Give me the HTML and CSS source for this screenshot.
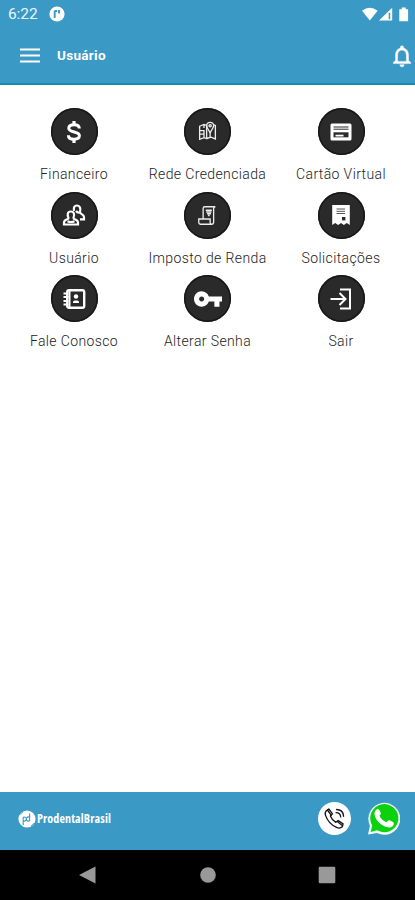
FILE: index.html
```html
<!DOCTYPE html>
<html lang="pt-BR">
<head>
<meta charset="utf-8">
<meta name="viewport" content="width=device-width, initial-scale=1">
<title>Usuário</title>
<link rel="stylesheet" href="styles.css">
</head>
<body>
<header class="header">
  <div class="status">
    <span class="time">6:22</span>
    <svg class="status-app" viewBox="0 0 16 16"><circle cx="8" cy="8" r="7.6" fill="#fff"/><path d="M5.700 12V4.800M5.700 5H8.200M10 4v3.400" fill="none" stroke="#3b99c6" stroke-width="1.900"/></svg>
    <svg class="status-icons" viewBox="0 0 48 15"><path d="M0 3.700Q7.800-2 15.600 3.700L7.800 13.500Z" fill="#fff"/><path d="M17 13.500 30.200.7v12.800Z" fill="#fff"/><path d="M26.700 5.800h1.500v6.500h-1.500Z" fill="#3b99c6"/><path d="M37.300 2.200h2.400V.5h4v1.700h2.400v12h-8.800Z" fill="#fff"/></svg>
  </div>
  <div class="toolbar">
    <svg class="menu" viewBox="0 0 20 15"><path d="M0 1.500h20M0 7.500h20M0 13.500h20" stroke="#fff" stroke-width="2.200"/></svg>
    <h1 class="title">Usuário</h1>
    <svg class="bell" viewBox="0 0 24 24"><path fill="#fff" stroke="#fff" stroke-width=".4" d="M12 22c1.100 0 2-.9 2-2h-4c0 1.100.9 2 2 2zm6-6v-5c0-3.070-1.630-5.640-4.500-6.320V4c0-.83-.67-1.500-1.500-1.500s-1.500.67-1.500 1.500v.68C7.640 5.360 6 7.920 6 11v5l-2 2v1h16v-1l-2-2zm-2 1H8v-6c0-2.480 1.510-4.500 4-4.500s4 2.020 4 4.500v6z"/></svg>
  </div>
</header>
<main class="grid">
  <div class="item"><div class="disc"><svg class="glyph" viewBox="0 0 24 24"><path d="M17.300 8.500C17.300 5.500 15 4.700 12 4.700S6.800 5.900 6.800 8.200c0 4.800 10.600 2.900 10.600 7.400 0 2.500-2.400 3.700-5.400 3.700s-5.600-1.200-5.600-4" fill="none" stroke="#fff" stroke-width="3"/><path d="M10.400 1h3.200v3.500h-3.200zM10.400 19.500h3.200V23h-3.200z" fill="#fff"/></svg></div><span class="label">Financeiro</span></div>
  <div class="item"><div class="disc"><svg class="glyph line" viewBox="0 0 24 24"><path d="M3 6l5-2 3 1v15l-3-1-5 2ZM11 20l5-1.500 5 2V5l-2-.7M8 4v4M3 11h5v4H3M8 15v4"/><path d="M15 14c-1-4-4-5.500-4-8.500a4 4 0 0 1 8 0c0 3-3 4.500-4 8.500v5"/><circle cx="15" cy="5.500" r="1.300"/></svg></div><span class="label">Rede Credenciada</span></div>
  <div class="item"><div class="disc"><svg class="glyph" viewBox="0 0 24 24"><rect x="1.500" y="3.500" width="21" height="17" rx="1.500" fill="#fff"/><path d="M4.500 7h15M4.500 9.200h15" stroke="#2a2a2a" stroke-width="1"/><path d="M4.500 12.300h15v5h-15Z" fill="#2a2a2a"/><path d="M6.500 15.600h8" stroke="#fff" stroke-width="1.800"/></svg></div><span class="label">Cartão Virtual</span></div>
  <div class="item"><div class="disc"><svg class="glyph users" viewBox="0 0 24 24"><path d="M12 8C11.500 4.500 12 2.500 15 2.500s4 3 3 6.800c0 2 4 1.700 4 4.700v2.300h-4"/><path d="M14 8q1.500 2 3.500 1.500"/><path d="M6.500 15C5 11.500 5.500 8.500 8.800 8.500s4 3 2.700 6.500c0 1.800 4.500 1.500 4.500 4.500v2H2v-2c0-3 4.500-2.700 4.500-4.500Z"/><path d="M5.500 18.200q3.500 1.600 7 0"/></svg></div><span class="label">Usuário</span></div>
  <div class="item"><div class="disc"><svg class="glyph line" viewBox="0 0 24 24"><path d="M7 16V4a2 2 0 0 1 2-2h12a2 2 0 0 0-2 2v16a2 2 0 0 1-2 2H4a2 2 0 0 1-2-2v-4h13v4a2 2 0 0 0 4 0"/><path d="M10 6h7M10.500 8h6M11.500 10h4.500M12.500 12h2"/></svg></div><span class="label">Imposto de Renda</span></div>
  <div class="item"><div class="disc"><svg class="glyph" viewBox="0 0 24 24"><path d="M3.200 2h17.600v20l-3-2-2.900 2-2.900-2-2.900 2-2.900-2-3 2Z" fill="#fff"/><path d="M7.500 6h8.500M7.500 8.300h8.500M7.500 10.500h8.500" stroke="#555" stroke-width="1"/><path d="M13 14h3.400v3.400H13Z" fill="#2a2a2a"/></svg></div><span class="label">Solicitações</span></div>
  <div class="item"><div class="disc"><svg class="glyph" viewBox="0 0 24 24"><rect x="5.200" y="3.200" width="17" height="17.600" rx="1.800" fill="none" stroke="#fff" stroke-width="2.400"/><path d="M7.500 3v18" stroke="#fff" stroke-width="2"/><path d="M1.500 6.500h5M1.500 10h5M1.500 14h5M1.500 17.500h5" stroke="#fff" stroke-width="2"/><circle cx="14" cy="9.500" r="2.200" fill="#fff"/><path d="M11 16v-1.200c0-1.700 6-1.700 6 0V16Z" fill="#fff"/></svg></div><span class="label">Fale Conosco</span></div>
  <div class="item"><div class="disc"><svg class="key" viewBox="1 5 22 14"><path fill="#fff" d="M12.650 10C11.830 7.670 9.610 6 7 6c-3.310 0-6 2.690-6 6s2.690 6 6 6c2.610 0 4.830-1.670 5.650-4H17v4h4v-4h2v-4H12.650zM7 14c-1.100 0-2-.9-2-2s.9-2 2-2 2 .9 2 2-.9 2-2 2z"/></svg></div><span class="label">Alterar Senha</span></div>
  <div class="item"><div class="disc"><svg class="glyph" viewBox="0 0 24 24"><path d="M1.500 12h15M10.500 6l6 6-6 6M11 2.500h10v19H11" fill="none" stroke="#fff" stroke-width="2"/></svg></div><span class="label">Sair</span></div>
</main>
<footer class="footer">
  <div class="brand">
    <svg class="logo" viewBox="0 0 18 18"><circle cx="9" cy="9" r="8.600" fill="#fff"/><path d="M5.200 15V7.500a2 2 0 1 1 0 3.200M11.600 3.500v7a2 2 0 1 1 0-3" fill="none" stroke="#3b99c6" stroke-width="1.100"/><path d="M2 4.500 5 2M13 16l3-3" stroke="#3b99c6" stroke-width=".8"/></svg>
    <span class="brand-name">ProdentalBrasil</span>
  </div>
  <div class="contacts">
    <svg class="phone" viewBox="0 0 32 32"><circle cx="16" cy="16" r="16" fill="#fff"/><g fill="none" stroke="#151515" stroke-width="1.300" stroke-linejoin="round" stroke-linecap="round"><path d="M8.300 8.200 10.500 6.800 14 11.500l-2 2q1.500 4 5.300 6.200l2.200-1.800 4.800 3.300-.7 2.900q-2.400 2-5.600.6Q10 21 7.300 13q-1-3 1-4.800Z"/><path d="m9.300 8 3.500 4.800M18.700 19l4.500 3.500M18 7.300q6.300 0 6.800 6.500M17.500 10.300q4.200 0 4.500 4.200"/></g></svg>
    <svg class="whatsapp" viewBox="0 0 32 34"><path d="M1 32.500 2.800 24A15.500 15.500 0 1 1 9.500 31Z" fill="#f4fff3"/><path d="m3.500 30 1.500-6.300A13.700 13.700 0 1 1 9.800 28.500Z" fill="#0bd10f"/><path fill="#fff" d="M8.800 8.500c-4 4 .5 10.800 4.500 13.900s9.800 5.100 12.400.8c1-2 .2-2.700-4-4.500-1.200-.5-2.200 2.200-3.400 1.700-3-1.300-5-3.500-6-5.800-.5-1 1.600-1.700 1.100-3-1.500-4-2.700-4.800-4.600-3.100Z"/></svg>
  </div>
</footer>
<nav class="navbar">
  <svg class="nav-icon" viewBox="0 0 18 18"><path d="M0 9 16.500.5v17Z" fill="#999"/></svg>
  <svg class="nav-icon" viewBox="0 0 18 18"><circle cx="9" cy="9" r="7.800" fill="#999"/></svg>
  <svg class="nav-icon" viewBox="0 0 18 18"><rect x=".7" y=".7" width="16.600" height="16.600" rx="1.200" fill="#999"/></svg>
</nav>
</body>
</html>
```
FILE: styles.css
```css
* { box-sizing: border-box; }
body { margin: 0; height: 900px; display: flex; flex-direction: column; overflow: hidden; background: #fff; font-family: Roboto, sans-serif; }
svg { display: block; flex: none; }
.header { height: 85px; background: #3b99c6; border-bottom: 2px solid #168ab5; color: #fff; }
.status { height: 28px; display: flex; align-items: center; padding: 0 6px 0 8px; }
.time { width: 41px; font-size: 15.5px; line-height: 28px; letter-spacing: -.1px; color: #e9f6fc; }
.status-app { width: 16px; height: 16px; }
.status-icons { width: 48px; height: 15px; margin-left: auto; margin-right: -1px; }
.toolbar { height: 54px; display: flex; align-items: center; padding: 0 0 0 20px; }
.menu { width: 20px; height: 15px; }
.title { margin: 0 0 0 17px; font-size: 13.5px; line-height: 20px; font-weight: 700; letter-spacing: .3px; }
.bell { width: 26px; height: 26px; margin-left: auto; margin-top: 1px; }
.grid { flex: 1; display: grid; grid-template-columns: repeat(3, 133.5px); grid-auto-rows: 83.5px; justify-content: center; align-content: start; padding-top: 23px; }
.item { display: flex; flex-direction: column; align-items: center; }
.disc { width: 47px; height: 47px; border-radius: 50%; background: #2a2a2a; box-shadow: inset 0 0 0 1.5px #171717; display: flex; align-items: center; justify-content: center; }
.glyph { width: 24px; height: 24px; }
.line { width: 21px; height: 21px; fill: none; stroke: #eee; stroke-width: 1.5; }
.users { fill: none; stroke: #fff; stroke-width: 2.2; }
.key { width: 28px; height: 18px; }
.label { margin-top: 9px; font-size: 14px; line-height: 20px; font-weight: 300; color: #222; letter-spacing: .38px; white-space: nowrap; }
.footer { height: 58px; background: #3b99c6; display: flex; align-items: center; justify-content: space-between; padding: 0 15px 0 18px; }
.brand { display: flex; align-items: center; gap: 1px; margin-top: -5px; color: #fff; }
.logo { width: 18px; height: 18px; }
.brand-name { font: 700 12px/16px "Open Sans", sans-serif; font-stretch: 75%; letter-spacing: .13px; }
.contacts { display: flex; align-items: center; gap: 16px; margin-top: -5px; }
.phone { width: 33px; height: 33px; }
.whatsapp { width: 33px; height: 35px; }
.navbar { height: 50px; background: #000; display: flex; align-items: center; justify-content: space-between; padding: 0 79px; }
.nav-icon { width: 18px; height: 18px; }
```
